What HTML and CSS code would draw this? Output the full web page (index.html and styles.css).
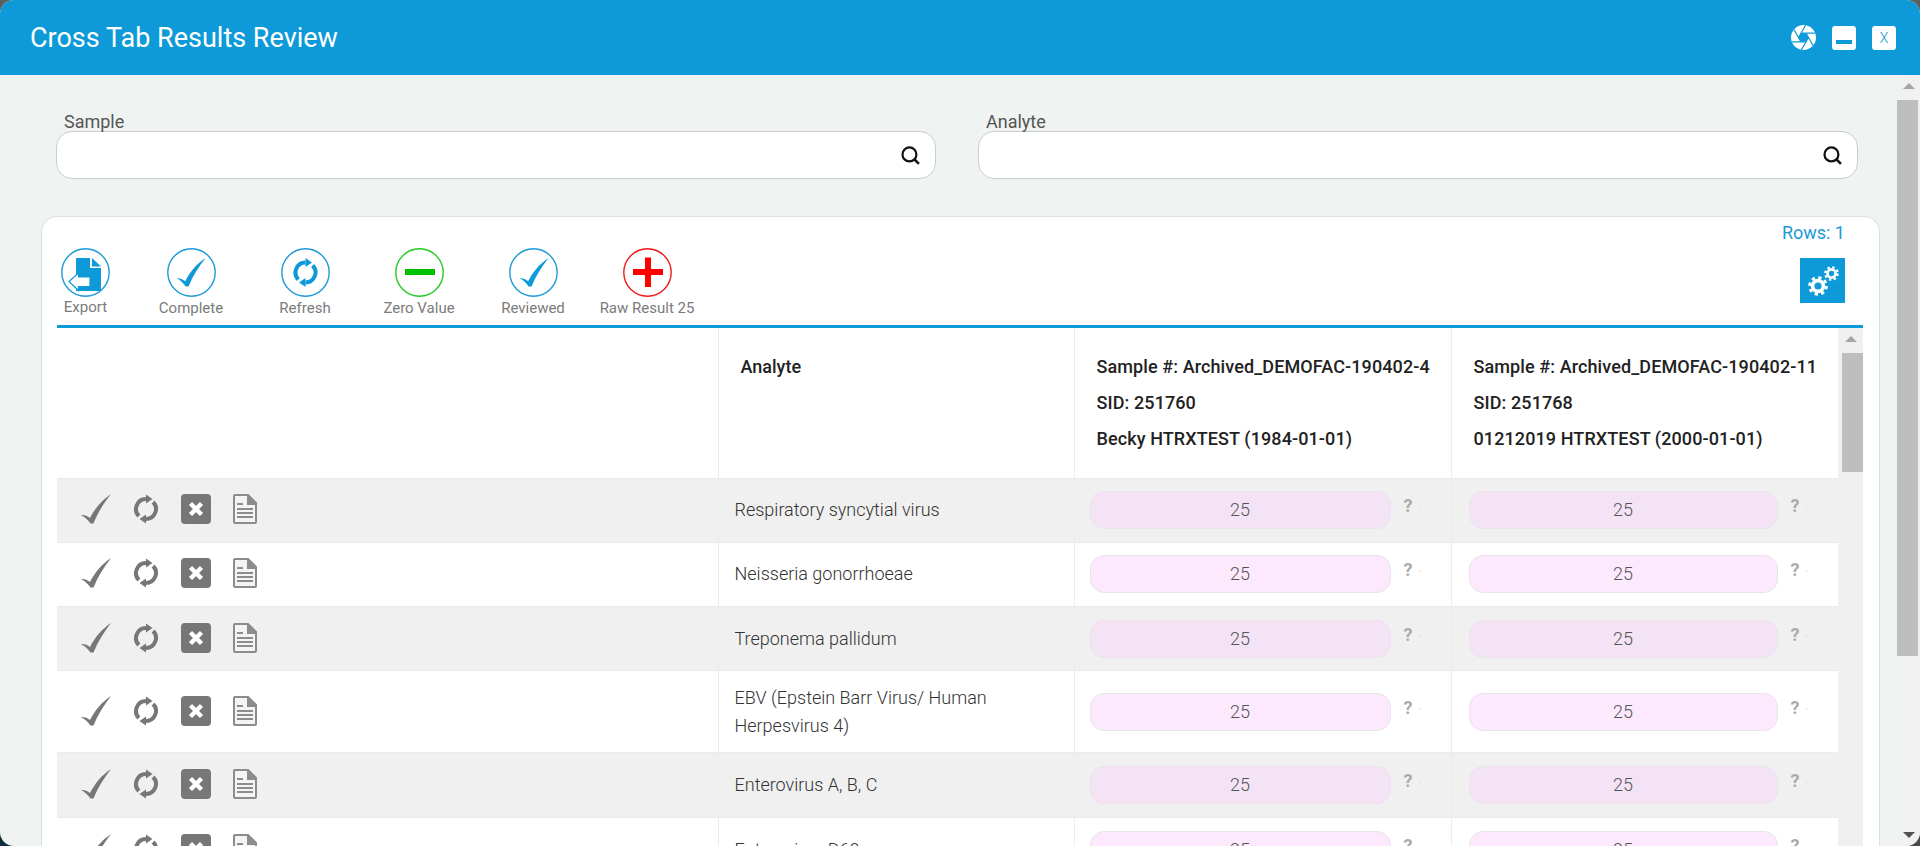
FILE: index.html
```html
<!DOCTYPE html>
<html lang="en">
<head>
  <meta charset="UTF-8">
  <title>Cross Tab Results Review</title>
  <link rel="stylesheet" href="styles.css">
</head>
<body>
  <svg class="defs" width="0" height="0">
    <symbol id="ic-check" viewBox="0 0 30 30">
      <path d="M0 21 C3 20.5 6 21.5 9 24 C14 14 21 6 30 0 C23 9 16.5 19 12.5 29.5 L9.5 29.5 C7 26 4 23 0 21Z"/>
    </symbol>
    <symbol id="ic-refresh" viewBox="0 0 26 30">
      <path class="arc" d="M13 5 A10 10 0 0 0 5.9 22"/>
      <path class="arc" d="M13 25 A10 10 0 0 0 20.1 8"/>
      <path d="M13 0.5 L19.5 5 L13 9.5Z"/>
      <path d="M13 20.5 L6.5 25 L13 29.5Z"/>
    </symbol>
    <symbol id="ic-cancel" viewBox="0 0 30 30">
      <rect width="30" height="30" rx="4"/>
      <path class="x" d="M9.5 9.5 L20.5 20.5 M20.5 9.5 L9.5 20.5"/>
    </symbol>
    <symbol id="ic-doc" viewBox="0 0 24 30">
      <path class="sheet" d="M2 1 H15 L23 9 V28 Q23 29 22 29 H2 Q1 29 1 28 V2 Q1 1 2 1Z"/>
      <path d="M14 1 H16 L24 9 V11 H14Z"/>
      <path d="M4 9 H10 V11 H4Z M4 14 H20 V16 H4Z M4 18 H20 V20 H4Z M4 22 H20 V24 H4Z"/>
    </symbol>
    <symbol id="ic-search" viewBox="0 0 18 18">
      <circle cx="8" cy="8" r="6.6" fill="none" stroke="#111" stroke-width="2.1"/>
      <path d="M12.8 12.8 L17 17" stroke="#111" stroke-width="2.4" fill="none"/>
    </symbol>
    <symbol id="ic-gear" viewBox="0 0 24 24">
      <circle cx="12" cy="12" r="6.5" fill="none" stroke="#fff" stroke-width="4.4"/>
      <circle cx="12" cy="12" r="10" fill="none" stroke="#fff" stroke-width="3.6" stroke-dasharray="3.9 3.95"/>
    </symbol>
  </svg>

  <div class="window">
    <header class="titlebar">
      <h1>Cross Tab Results Review</h1>
      <div class="win-btns">
        <svg class="aperture" width="25" height="25" viewBox="0 0 25 25">
          <circle cx="12.5" cy="12.5" r="12.5" fill="#fff"/>
          <path d="M7.5 12.5 L10 8.17 H15 L17.5 12.5 L15 16.83 H10Z" fill="#0e9ad8"/>
          <path d="M10 8.17 L24.2 8.17 M15 8.17 L22.1 20.47 M17.5 12.5 L10.4 24.8 M15 16.83 L0.8 16.83 M10 16.83 L2.9 4.53 M7.5 12.5 L14.6 0.2" stroke="#0e9ad8" stroke-width="1.2" fill="none"/>
        </svg>
        <span class="win-btn"><i class="dash"></i></span>
        <span class="win-btn">X</span>
      </div>
    </header>

    <div class="win-body">
      <main class="content">
        <div class="filters">
          <div class="field">
            <label>Sample</label>
            <div class="search"><svg width="19" height="19"><use href="#ic-search"/></svg></div>
          </div>
          <div class="field">
            <label>Analyte</label>
            <div class="search"><svg width="19" height="19"><use href="#ic-search"/></svg></div>
          </div>
        </div>

        <section class="card">
          <div class="toolbar">
            <div class="tools">
              <div class="tool tool-export">
                <svg class="circle" viewBox="0 0 49 49">
                  <circle class="ring" cx="24.5" cy="24.5" r="23.7"/>
                  <path class="fill" d="M15 10 H29 V20 H40 V43 H15Z"/>
                  <path class="fill" d="M31 10 L40 18.5 H31Z"/>
                  <path d="M8 33.5 L17.5 25 V29 H29 V38.5 H17.5 V42.5Z" fill="#fff" stroke="#0e9ad8" stroke-width="1.2"/>
                </svg>
                <span>Export</span>
              </div>
              <div class="tool">
                <svg class="circle" viewBox="0 0 49 49">
                  <circle class="ring" cx="24.5" cy="24.5" r="23.7"/>
                  <svg class="fill" x="9" y="10" width="30" height="29"><use href="#ic-check"/></svg>
                </svg>
                <span>Complete</span>
              </div>
              <div class="tool">
                <svg class="circle" viewBox="0 0 49 49">
                  <circle class="ring" cx="24.5" cy="24.5" r="23.7"/>
                  <svg class="fill" x="11.5" y="9.5" width="26" height="30"><use href="#ic-refresh"/></svg>
                </svg>
                <span>Refresh</span>
              </div>
              <div class="tool tool-green">
                <svg class="circle" viewBox="0 0 49 49">
                  <circle class="ring" cx="24.5" cy="24.5" r="23.7"/>
                  <rect class="fill" x="10" y="21" width="30" height="6"/>
                </svg>
                <span>Zero Value</span>
              </div>
              <div class="tool">
                <svg class="circle" viewBox="0 0 49 49">
                  <circle class="ring" cx="24.5" cy="24.5" r="23.7"/>
                  <svg class="fill" x="10" y="10" width="30" height="29"><use href="#ic-check"/></svg>
                </svg>
                <span>Reviewed</span>
              </div>
              <div class="tool tool-red">
                <svg class="circle" viewBox="0 0 49 49">
                  <circle class="ring" cx="24.5" cy="24.5" r="23.7"/>
                  <path class="fill" d="M22 9.5 H28 V21 H40 V27 H28 V39 H22 V27 H10 V21 H22Z"/>
                </svg>
                <span>Raw Result 25</span>
              </div>
            </div>
            <div class="toolbar-right">
              <div class="rows-count">Rows: 1</div>
              <div class="gear-btn">
                <svg class="gear-big" width="20" height="20"><use href="#ic-gear"/></svg>
                <svg class="gear-small" width="15" height="15"><use href="#ic-gear"/></svg>
              </div>
            </div>
          </div>

          <div class="table-wrap">
            <table class="results">
              <colgroup>
                <col class="col-actions"><col class="col-analyte"><col class="col-s1"><col class="col-s2">
              </colgroup>
              <thead>
                <tr>
                  <th></th>
                  <th class="th-analyte">Analyte</th>
                  <th class="th-sample">
                    <div>Sample #: Archived_DEMOFAC-190402-4</div>
                    <div>SID: 251760</div>
                    <div>Becky HTRXTEST (1984-01-01)</div>
                  </th>
                  <th class="th-sample">
                    <div>Sample #: Archived_DEMOFAC-190402-11</div>
                    <div>SID: 251768</div>
                    <div>01212019 HTRXTEST (2000-01-01)</div>
                  </th>
                </tr>
              </thead>
              <tbody>
                <tr>
                  <td><div class="acts"><svg class="a-check"><use href="#ic-check"/></svg><svg class="a-refresh"><use href="#ic-refresh"/></svg><svg class="a-cancel"><use href="#ic-cancel"/></svg><svg class="a-doc"><use href="#ic-doc"/></svg></div></td>
                  <td class="name">Respiratory syncytial virus</td>
                  <td class="val"><div class="val-box"><span class="pill">25</span><span class="q">?</span><span class="tick"></span></div></td>
                  <td class="val val2"><div class="val-box"><span class="pill">25</span><span class="q">?</span><span class="tick"></span></div></td>
                </tr>
                <tr>
                  <td><div class="acts"><svg class="a-check"><use href="#ic-check"/></svg><svg class="a-refresh"><use href="#ic-refresh"/></svg><svg class="a-cancel"><use href="#ic-cancel"/></svg><svg class="a-doc"><use href="#ic-doc"/></svg></div></td>
                  <td class="name">Neisseria gonorrhoeae</td>
                  <td class="val"><div class="val-box"><span class="pill">25</span><span class="q">?</span><span class="tick"></span></div></td>
                  <td class="val val2"><div class="val-box"><span class="pill">25</span><span class="q">?</span><span class="tick"></span></div></td>
                </tr>
                <tr>
                  <td><div class="acts"><svg class="a-check"><use href="#ic-check"/></svg><svg class="a-refresh"><use href="#ic-refresh"/></svg><svg class="a-cancel"><use href="#ic-cancel"/></svg><svg class="a-doc"><use href="#ic-doc"/></svg></div></td>
                  <td class="name">Treponema pallidum</td>
                  <td class="val"><div class="val-box"><span class="pill">25</span><span class="q">?</span><span class="tick"></span></div></td>
                  <td class="val val2"><div class="val-box"><span class="pill">25</span><span class="q">?</span><span class="tick"></span></div></td>
                </tr>
                <tr>
                  <td><div class="acts"><svg class="a-check"><use href="#ic-check"/></svg><svg class="a-refresh"><use href="#ic-refresh"/></svg><svg class="a-cancel"><use href="#ic-cancel"/></svg><svg class="a-doc"><use href="#ic-doc"/></svg></div></td>
                  <td class="name">EBV (Epstein Barr Virus/ Human Herpesvirus 4)</td>
                  <td class="val"><div class="val-box"><span class="pill">25</span><span class="q">?</span><span class="tick"></span></div></td>
                  <td class="val val2"><div class="val-box"><span class="pill">25</span><span class="q">?</span><span class="tick"></span></div></td>
                </tr>
                <tr>
                  <td><div class="acts"><svg class="a-check"><use href="#ic-check"/></svg><svg class="a-refresh"><use href="#ic-refresh"/></svg><svg class="a-cancel"><use href="#ic-cancel"/></svg><svg class="a-doc"><use href="#ic-doc"/></svg></div></td>
                  <td class="name">Enterovirus A, B, C</td>
                  <td class="val"><div class="val-box"><span class="pill">25</span><span class="q">?</span><span class="tick"></span></div></td>
                  <td class="val val2"><div class="val-box"><span class="pill">25</span><span class="q">?</span><span class="tick"></span></div></td>
                </tr>
                <tr>
                  <td><div class="acts"><svg class="a-check"><use href="#ic-check"/></svg><svg class="a-refresh"><use href="#ic-refresh"/></svg><svg class="a-cancel"><use href="#ic-cancel"/></svg><svg class="a-doc"><use href="#ic-doc"/></svg></div></td>
                  <td class="name">Enterovirus D68</td>
                  <td class="val"><div class="val-box"><span class="pill">25</span><span class="q">?</span><span class="tick"></span></div></td>
                  <td class="val val2"><div class="val-box"><span class="pill">25</span><span class="q">?</span><span class="tick"></span></div></td>
                </tr>
              </tbody>
            </table>
            <div class="table-scroll">
              <i class="arrow-up"></i>
              <div class="table-thumb"></div>
            </div>
          </div>
        </section>
      </main>

      <div class="page-scroll">
        <i class="arrow-up"></i>
        <div class="page-thumb"></div>
        <i class="arrow-down"></i>
      </div>
    </div>
  </div>
</body>
</html>
```

FILE: styles.css
```css
* {
  box-sizing: border-box;
}

html, body {
  height: 100%;
}

body {
  margin: 0;
  overflow: hidden;
  font-family: Roboto, "Liberation Sans", sans-serif;
  background: linear-gradient(#5f5f5f 50%, transparent 50%), linear-gradient(90deg, #0c2c3c 50%, #4a4a4a 50%);
  color: #444;
}

.defs {
  position: absolute;
}

.window {
  height: 846px;
  display: flex;
  flex-direction: column;
  border-radius: 14px;
  overflow: hidden;
  background: #eff3f2;
}

/* title bar */
.titlebar {
  flex: none;
  height: 75px;
  background: #0e9ad8;
  display: flex;
  align-items: center;
  justify-content: space-between;
  padding: 0 24px 0 30px;
}

.titlebar h1 {
  margin: 0;
  font-size: 27px;
  font-weight: 400;
  color: #fff;
}

.win-btns {
  display: flex;
  align-items: center;
  gap: 16px;
}

.win-btn {
  width: 24px;
  height: 24px;
  background: #fff;
  border-radius: 3px;
  color: #0e9ad8;
  font-size: 14px;
  font-weight: 300;
  display: flex;
  align-items: center;
  justify-content: center;
}

.win-btn .dash {
  width: 16px;
  height: 3.5px;
  margin-top: 9px;
  background: #0e9ad8;
}

.win-body {
  flex: 1;
  min-height: 0;
  display: flex;
}

.content {
  flex: 1;
  min-width: 0;
  overflow: hidden;
}

/* filters */
.filters {
  display: flex;
  gap: 42px;
  padding: 38px 0 0 56px;
  width: 1858px;
}

.field {
  flex: 1;
}

.field label {
  display: block;
  margin-left: 8px;
  font-size: 18px;
  line-height: 18px;
  color: #555;
}

.search {
  height: 48px;
  background: #fff;
  border: 1px solid #ccc;
  border-radius: 16px;
  display: flex;
  align-items: center;
  justify-content: flex-end;
  padding-right: 15px;
}

/* card */
.card {
  margin: 37px 17px 0 41px;
  padding: 0 16px 0 15px;
  background: #fff;
  border: 1px solid #dde0e0;
  border-bottom: 0;
  border-radius: 16px 16px 0 0;
}

.toolbar {
  height: 108px;
  display: flex;
  justify-content: space-between;
}

.tools {
  display: flex;
  gap: 18px;
  padding: 31px 0 0 4px;
}

.tool {
  width: 96px;
  display: flex;
  flex-direction: column;
  align-items: center;
  font-size: 15px;
  color: #7b7b7b;
  white-space: nowrap;
}

.tool span {
  margin-top: 2px;
}

.tool-export {
  width: 49px;
  margin-right: 15px;
}

.tool-export span {
  margin-top: 1px;
}

.circle {
  width: 49px;
  height: 49px;
  flex: none;
}

.ring {
  fill: none;
  stroke: #1e9ad8;
  stroke-width: 1.4;
}

.fill {
  fill: #0e9ad8;
  color: #0e9ad8;
}

.tool-green .ring {
  stroke: #22cc22;
}

.tool-green .fill {
  fill: #00c000;
}

.tool-red .ring {
  stroke: #f01818;
}

.tool-red .fill {
  fill: #f00;
}

.toolbar-right {
  display: flex;
  flex-direction: column;
  align-items: flex-end;
  padding-right: 18px;
}

.rows-count {
  margin-top: 5px;
  font-size: 18px;
  line-height: 21px;
  color: #1e9ad8;
}

.gear-btn {
  position: relative;
  width: 45px;
  height: 45px;
  margin-top: 15px;
  background: #0e9ad8;
}

.gear-big {
  position: absolute;
  left: 8px;
  top: 18px;
}

.gear-small {
  position: absolute;
  left: 23.5px;
  top: 7.5px;
}

/* table */
.table-wrap {
  display: flex;
  border-top: 3px solid #0e9ad8;
}

.results {
  width: 1781px;
  flex: none;
  table-layout: fixed;
  border-collapse: collapse;
  font-size: 18px;
}

.col-actions { width: 661px; }
.col-analyte { width: 356px; }
.col-s1 { width: 377px; }
.col-s2 { width: 387px; }

.results th {
  height: 150px;
  padding: 0;
  text-align: left;
  vertical-align: middle;
  font-weight: 500;
  color: #222;
  border-left: 1px solid #ececec;
}

.results th:first-child,
.results td:first-child {
  border-left: 0;
}

.th-analyte {
  vertical-align: top !important;
  padding: 28px 0 0 22px !important;
  line-height: 22px;
}

.th-sample {
  padding-left: 22px !important;
  line-height: 36px;
  letter-spacing: 0.1px;
  white-space: nowrap;
}

.results td {
  height: 64.3px;
  padding: 0;
  border-left: 1px solid #ececec;
  border-top: 1px solid #ebebeb;
}

.results tbody tr:nth-child(odd) {
  background: #f0f0f0;
}

.results tbody tr:nth-child(odd) .pill {
  background: #f4e3f5;
}

.results td.name {
  padding: 12.5px 16px;
  line-height: 28px;
  font-weight: 300;
  color: #333;
}

.acts {
  display: flex;
  align-items: center;
  margin-top: -2px;
  padding-left: 24px;
  fill: #777;
  color: #777;
}

.arc {
  fill: none;
  stroke: currentColor;
  stroke-width: 4;
}

.a-check { width: 30px; height: 30px; margin-right: 22px; }
.a-refresh { width: 26px; height: 30px; margin-right: 22px; }
.a-cancel { width: 30px; height: 30px; margin-right: 22px; }
.a-doc { width: 24px; height: 30px; fill: #8c8c8c; }

.x {
  fill: none;
  stroke: #fff;
  stroke-width: 4.4;
}

.sheet {
  fill: #f4f4f4;
  stroke: #8c8c8c;
  stroke-width: 2;
}

.val-box {
  display: flex;
  align-items: center;
  padding-left: 15px;
}

.val2 .val-box {
  padding-left: 17px;
}

.pill {
  width: 301px;
  height: 38px;
  flex: none;
  background: #fce9fd;
  border: 1px solid #ebe3ec;
  border-radius: 14px;
  text-align: center;
  line-height: 36px;
  font-size: 18px;
  font-weight: 300;
  color: #555;
}

.val2 .pill {
  width: 309px;
}

.q {
  margin: -9px 0 0 13px;
  font-size: 18px;
  font-weight: 700;
  color: #aaa;
}

.tick {
  width: 1px;
  height: 2px;
  margin: -6px 0 0 7px;
  background: #ddd;
}

/* scrollbars */
.table-scroll {
  flex: 1;
  position: relative;
  background: #f0f0f0;
}

.table-thumb {
  position: absolute;
  left: 4px;
  right: 0;
  top: 25px;
  height: 119px;
  background: #bebebe;
}

.arrow-up,
.arrow-down {
  position: absolute;
  left: 50%;
  width: 0;
  height: 0;
  margin-left: -6px;
  border-left: 6px solid transparent;
  border-right: 6px solid transparent;
}

.arrow-up {
  top: 8px;
  border-bottom: 6px solid #a5a5a5;
}

.arrow-down {
  bottom: 8px;
  border-top: 6px solid #505050;
}

.page-scroll {
  flex: none;
  width: 23px;
  position: relative;
  background: #f1f1f1;
}

.page-thumb {
  position: absolute;
  left: 0;
  right: 2px;
  top: 25px;
  height: 556px;
  background: #bebebe;
}
```
